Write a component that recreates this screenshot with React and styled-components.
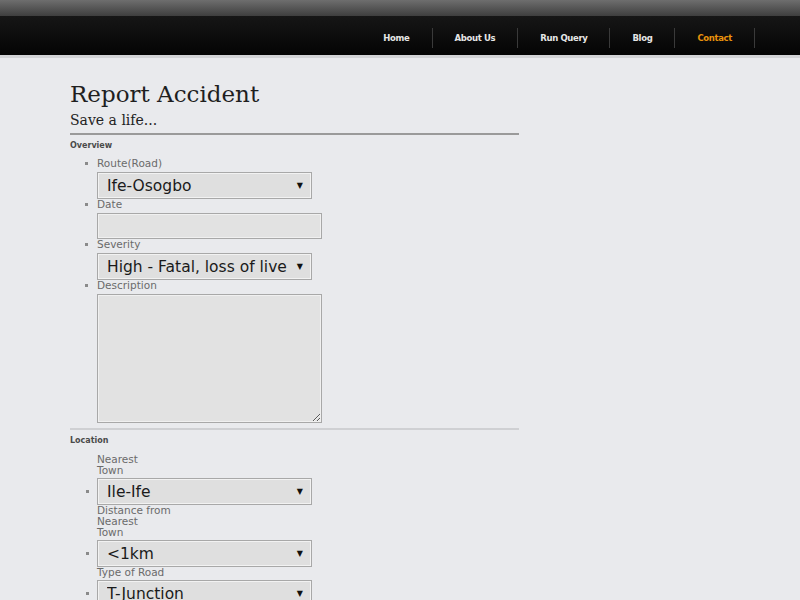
import styled, { createGlobalStyle } from "styled-components";

const GlobalStyle = createGlobalStyle`
  body {
    margin: 0;
    background: #e9eaed;
    font-family: "DejaVu Sans", Verdana, sans-serif;
  }
`;

const TopStrip = styled.div`
  height: 16px;
  background: linear-gradient(#6e6e6e, #3e3e3e);
`;

const NavBar = styled.div`
  height: 39px;
  background: linear-gradient(#161616, #040404);
  display: flex;
  justify-content: flex-end;
  align-items: center;
  padding-right: 45px;
  border-bottom: 3px solid #d2d3d6;
`;

const Menu = styled.ul`
  list-style: none;
  margin: 0;
  padding: 4px 0 0;
  display: flex;
  align-items: center;
`;

const MenuItem = styled.li`
  padding: 0 22px;
  height: 20px;
  display: flex;
  align-items: center;
  border-right: 1px solid #3a3a3a;
  font-family: Tahoma, "DejaVu Sans", sans-serif;
  font-size: 8.5px;
  font-weight: bold;
  letter-spacing: -0.35px;
  color: ${(props) => (props.active ? "#e8930c" : "#e6e6e6")};
`;

const Content = styled.div`
  width: 449px;
  padding-left: 70px;
`;

const Title = styled.h1`
  font-family: "DejaVu Serif", Georgia, serif;
  font-size: 23px;
  font-weight: normal;
  color: #1f1f1f;
  margin: 0;
  padding-top: 20px;
  line-height: 32px;
`;

const Subtitle = styled.h2`
  font-family: "DejaVu Serif", Georgia, serif;
  font-size: 14px;
  font-weight: normal;
  color: #222;
  margin: 0;
  line-height: 20px;
  padding-bottom: 3px;
  border-bottom: 2px solid #9a9a9a;
`;

const Fieldset = styled.fieldset`
  border: none;
  margin: 0;
  padding: 6px 0 5px;
  border-bottom: ${(props) => (props.divider ? "2px solid #cfd0d3" : "none")};
`;

const Legend = styled.div`
  font-size: 8px;
  font-weight: bold;
  color: #4a4a4a;
  line-height: 10px;
`;

const Fields = styled.ul`
  list-style: none;
  margin: 0;
  padding: 7px 0 0 16px;
`;

const Field = styled.li`
  display: flex;
  flex-direction: column;
`;

const Label = styled.div`
  position: relative;
  font-size: 10.5px;
  line-height: 11px;
  color: #6b6b6b;
  padding-left: 11px;
  margin-bottom: ${(props) => (props.gap ? props.gap : 3)}px;
`;

const Bullet = styled.span`
  width: 3px;
  height: 3px;
  background: #8a8a8a;
  display: inline-block;
  flex: none;
`;

const LabelBullet = styled(Bullet)`
  position: absolute;
  left: -1px;
  top: 4px;
`;

const Row = styled.div`
  display: flex;
  align-items: center;
  gap: 8px;
`;

const SelectWrap = styled.div`
  position: relative;
  width: 215px;
  height: 27px;
  margin-left: ${(props) => (props.indent ? 11 : 0)}px;
  &::after {
    content: "▼";
    position: absolute;
    right: 9px;
    top: 9px;
    font-size: 8px;
    color: #111;
    pointer-events: none;
  }
`;

const Select = styled.select`
  appearance: none;
  width: 100%;
  height: 100%;
  box-sizing: border-box;
  border: 1px solid #a8a8a8;
  box-shadow: inset 0 0 0 1px #f2f2f2;
  background: #dfdfdf;
  font-family: Tahoma, "DejaVu Sans", sans-serif;
  font-size: 15.5px;
  color: #1a1a1a;
  padding: 0 0 0 9px;
  outline: none;
`;

const TextInput = styled.input`
  display: block;
  margin-left: 11px;
  width: 225px;
  height: 26px;
  box-sizing: border-box;
  border: 1px solid #a8a8a8;
  box-shadow: inset 0 0 0 1px #f0f0f0;
  background: #e2e2e2;
`;

const TextArea = styled.textarea`
  display: block;
  margin-left: 11px;
  width: 225px;
  height: 129px;
  box-sizing: border-box;
  border: 1px solid #a8a8a8;
  box-shadow: inset 0 0 0 1px #f0f0f0;
  background: #e2e2e2;
  resize: both;
`;

const Gap = styled.div`
  height: ${(props) => props.h}px;
`;

function Dropdown({ value, indent }) {
  return (
    <SelectWrap indent={indent}>
      <Select defaultValue={value}>
        <option>{value}</option>
      </Select>
    </SelectWrap>
  );
}

const overview = [
  { label: "Route(Road)", kind: "select", value: "Ife-Osogbo" },
  { label: "Date", kind: "input" },
  { label: "Severity", kind: "select", value: "High - Fatal, loss of live" },
  { label: "Description", kind: "textarea" },
];

const location = [
  { lines: ["Nearest", "Town"], value: "Ile-Ife" },
  { lines: ["Distance from", "Nearest", "Town"], value: "<1km" },
  { lines: ["Type of Road"], value: "T-Junction" },
];

export default function App() {
  return (
    <>
      <GlobalStyle />
      <TopStrip />
      <NavBar>
        <Menu>
          <MenuItem>Home</MenuItem>
          <MenuItem>About Us</MenuItem>
          <MenuItem>Run Query</MenuItem>
          <MenuItem>Blog</MenuItem>
          <MenuItem active>Contact</MenuItem>
        </Menu>
      </NavBar>
      <Content>
        <Title>Report Accident</Title>
        <Subtitle>Save a life...</Subtitle>
        <Fieldset divider>
          <Legend>Overview</Legend>
          <Fields>
            {overview.map((f) => (
              <Field key={f.label}>
                <Label>
                  <LabelBullet />
                  {f.label}
                </Label>
                {f.kind === "select" && <Dropdown value={f.value} indent />}
                {f.kind === "input" && <TextInput />}
                {f.kind === "textarea" && <TextArea />}
              </Field>
            ))}
          </Fields>
        </Fieldset>
        <Fieldset>
          <Legend>Location</Legend>
          <Fields>
            <Gap h={1} />
            {location.map((f) => (
              <Field key={f.value}>
                <Label gap={2}>
                  {f.lines.map((l) => (
                    <div key={l}>{l}</div>
                  ))}
                </Label>
                <Row>
                  <Bullet />
                  <Dropdown value={f.value} />
                </Row>
              </Field>
            ))}
          </Fields>
        </Fieldset>
      </Content>
    </>
  );
}
